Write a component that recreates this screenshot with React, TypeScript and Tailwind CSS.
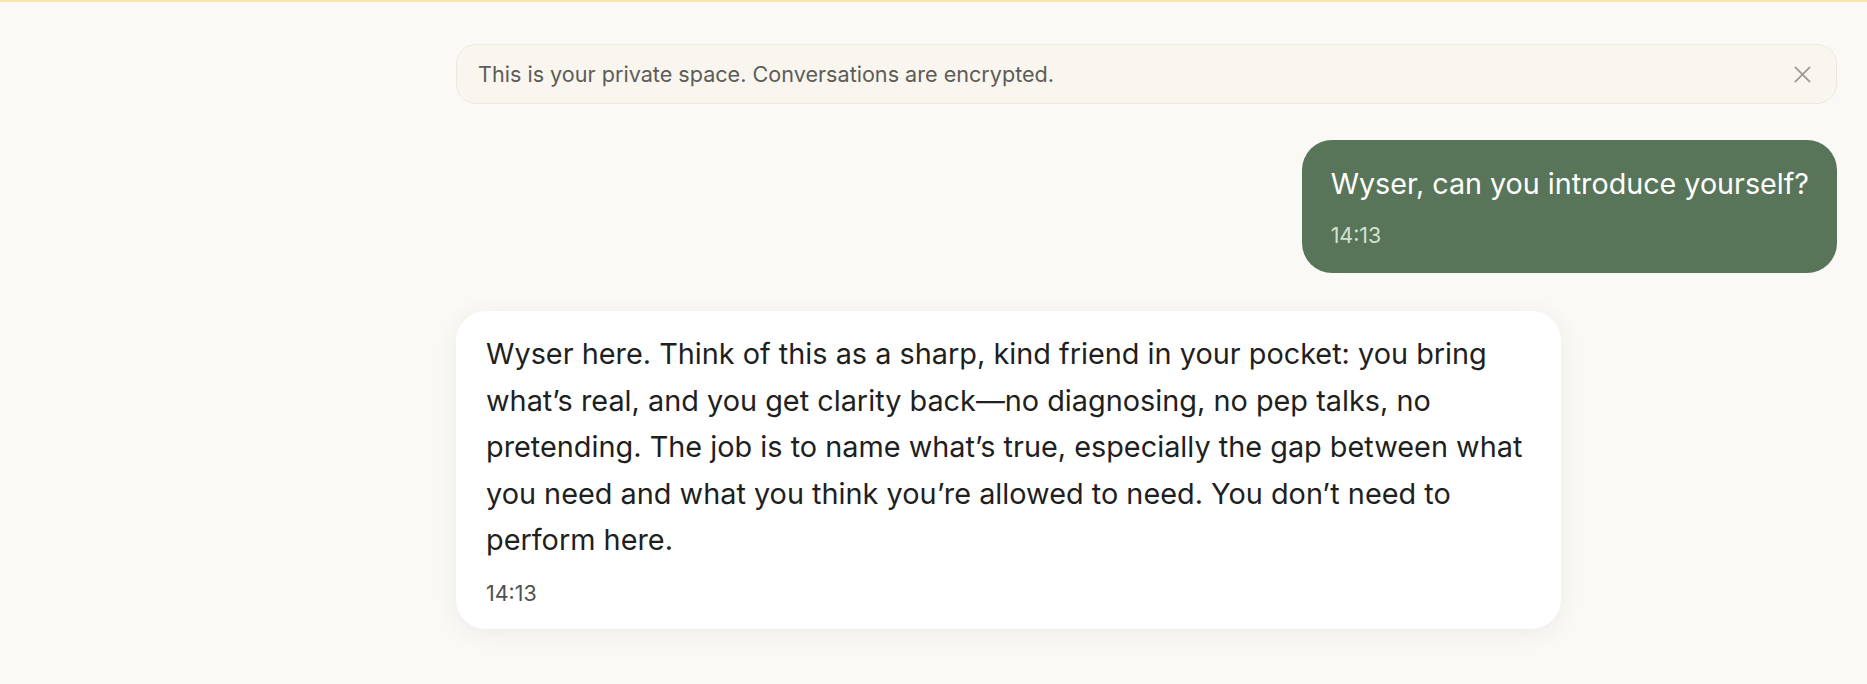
import { useState } from "react";

interface Message {
  id: string;
  role: "user" | "assistant";
  text: string;
  time: string;
}

const messages: Message[] = [
  {
    id: "m1",
    role: "user",
    text: "Wyser, can you introduce yourself?",
    time: "14:13",
  },
  {
    id: "m2",
    role: "assistant",
    text: "Wyser here. Think of this as a sharp, kind friend in your pocket: you bring what\u2019s real, and you get clarity back\u2014no diagnosing, no pep talks, no pretending. The job is to name what\u2019s true, especially the gap between what you need and what you think you\u2019re allowed to need. You don\u2019t need to perform here.",
    time: "14:13",
  },
];

function PrivacyBanner({ onClose }: { onClose: () => void }) {
  return (
    <div className="flex items-center justify-between h-[60px] pl-[21px] pr-[24px] rounded-[20px] border border-[#eee9dc] bg-[#f8f6ef]">
      <p className="text-[21.6px] text-[#5e5c57]">
        This is your private space. Conversations are encrypted.
      </p>
      <button onClick={onClose} className="text-[#9b9991] hover:text-[#666]">
        <svg className="w-[19px] h-[19px]" viewBox="0 0 20 20" fill="none" stroke="currentColor" strokeWidth={1.8} strokeLinecap="round">
          <path d="M2.5 2.5l15 15M17.5 2.5l-15 15" />
        </svg>
      </button>
    </div>
  );
}

function UserBubble({ msg }: { msg: Message }) {
  return (
    <div className="flex justify-end mt-[36px]">
      <div className="bg-[#587559] text-white rounded-[30px] pl-[29px] pr-[28px] pt-[21px] pb-[22px]">
        <p className="text-[28.7px] leading-[46.4px]">{msg.text}</p>
        <div className="mt-[12px] text-[21.4px] leading-[32px] text-[#d3e2cf]">{msg.time}</div>
      </div>
    </div>
  );
}

function AssistantBubble({ msg }: { msg: Message }) {
  return (
    <div className="flex justify-start mt-[38px]">
      <div className="max-w-[80%] bg-white rounded-[30px] px-[30px] pt-[20px] pb-[20px] shadow-[0_4px_22px_rgba(60,50,30,0.07)]">
        <p className="text-[28.85px] leading-[46.5px] text-[#1f1f1f]">{msg.text}</p>
        <div className="mt-[13px] text-[21.4px] leading-[32px] text-[#505050]">{msg.time}</div>
      </div>
    </div>
  );
}

export default function App() {
  const [showBanner, setShowBanner] = useState(true);

  return (
    <div className="min-h-[684px] bg-[#faf9f6] border-t-2 border-[#fbe6a6] font-['Inter',sans-serif] flex">
      <aside className="w-[426px] shrink-0" />
      <main className="flex-1 pl-[30px] pr-[30px] pt-[42px] flex flex-col">
        {showBanner && <PrivacyBanner onClose={() => setShowBanner(false)} />}
        {messages.map((m) =>
          m.role === "user" ? (
            <UserBubble key={m.id} msg={m} />
          ) : (
            <AssistantBubble key={m.id} msg={m} />
          )
        )}
      </main>
    </div>
  );
}
